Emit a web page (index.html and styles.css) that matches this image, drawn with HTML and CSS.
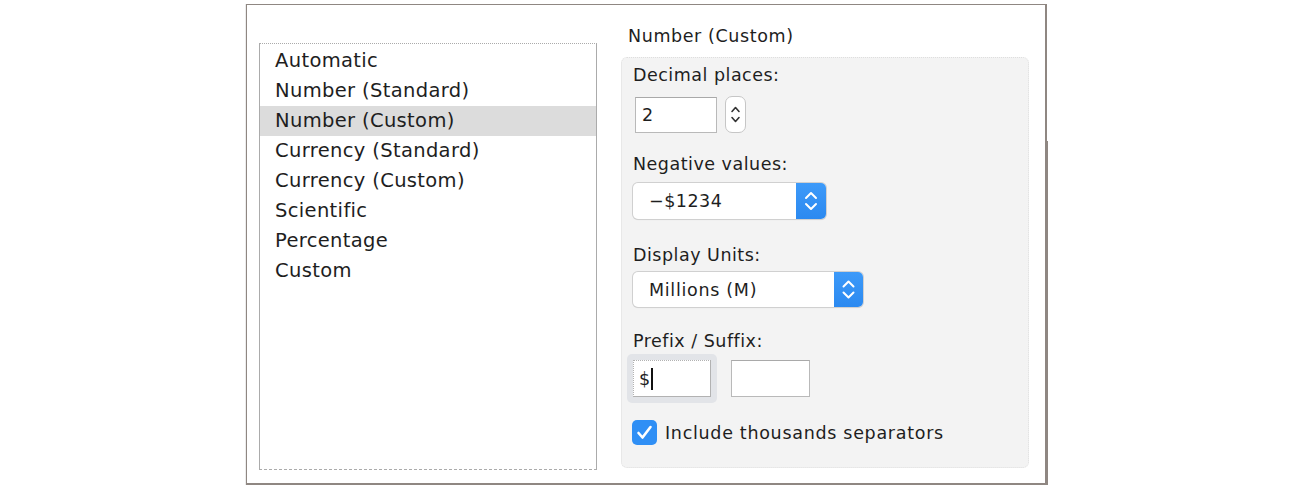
FILE: index.html
```html
<!DOCTYPE html>
<html>
<head>
<meta charset="utf-8">
<link rel="stylesheet" href="styles.css">
</head>
<body>
<div class="frame">
  <ul class="list">
    <li>Automatic</li>
    <li>Number (Standard)</li>
    <li class="sel">Number (Custom)</li>
    <li>Currency (Standard)</li>
    <li>Currency (Custom)</li>
    <li>Scientific</li>
    <li>Percentage</li>
    <li>Custom</li>
  </ul>
  <div class="right">
    <div class="title">Number (Custom)</div>
    <div class="panel">
      <div class="label l1">Decimal places:</div>
      <div class="row">
        <div class="field dec">2</div>
        <div class="stepper">
          <svg width="21" height="37" viewBox="0 0 21 37"><path d="M7 15.5 L10.5 11.5 L14 15.5" fill="none" stroke="#333" stroke-width="1.6" stroke-linecap="round" stroke-linejoin="round"/><path d="M7 21.5 L10.5 25.5 L14 21.5" fill="none" stroke="#333" stroke-width="1.6" stroke-linecap="round" stroke-linejoin="round"/></svg>
        </div>
      </div>
      <div class="label l2">Negative values:</div>
      <div class="select s1">
        <span class="val">−$1234</span>
        <span class="arrows"><svg width="30" height="36" viewBox="0 0 30 36"><path d="M10 15 L15 10 L20 15" fill="none" stroke="#fff" stroke-width="2" stroke-linecap="round" stroke-linejoin="round"/><path d="M10 21 L15 26 L20 21" fill="none" stroke="#fff" stroke-width="2" stroke-linecap="round" stroke-linejoin="round"/></svg></span>
      </div>
      <div class="label l3">Display Units:</div>
      <div class="select s2">
        <span class="val">Millions (M)</span>
        <span class="arrows"><svg width="29" height="35" viewBox="0 0 29 35"><path d="M9.5 14.5 L14.5 9.5 L19.5 14.5" fill="none" stroke="#fff" stroke-width="2" stroke-linecap="round" stroke-linejoin="round"/><path d="M9.5 20.5 L14.5 25.5 L19.5 20.5" fill="none" stroke="#fff" stroke-width="2" stroke-linecap="round" stroke-linejoin="round"/></svg></span>
      </div>
      <div class="label l4">Prefix / Suffix:</div>
      <div class="row prefixrow">
        <div class="ring"><div class="field px">$<span class="caret"></span></div></div>
        <div class="field sx"></div>
      </div>
      <div class="check">
        <span class="box"><svg width="25" height="25" viewBox="0 0 25 25"><path d="M6.5 13 L10.5 17.5 L18.5 7" fill="none" stroke="#fff" stroke-width="2.6" stroke-linecap="round" stroke-linejoin="round"/></svg></span>
        <span class="clabel">Include thousands separators</span>
      </div>
    </div>
  </div>
</div>
</body>
</html>
```

FILE: styles.css
```css
html, body {
  margin: 0;
  padding: 0;
  background: #fff;
}
body {
  font-family: "DejaVu Sans", "Liberation Sans", sans-serif;
  color: #1e1e1e;
  padding: 4px 0 0 246px;
}
.frame {
  position: relative;
  box-sizing: border-box;
  width: 801px;
  height: 481px;
  border: 1px solid #8f8782;
  border-right-width: 2px;
  border-bottom-width: 2px;
  background: #fff;
  display: flex;
  padding: 38px 0 0 12px;
  box-shadow: -1px 0 0 #ececec;
}
.frame::after {
  content: "";
  position: absolute;
  right: -3px;
  top: 136px;
  bottom: -2px;
  width: 2px;
  background: #8f8782;
}
.list {
  list-style: none;
  margin: 0;
  padding: 2px 0 0 0;
  box-sizing: border-box;
  width: 338px;
  height: 427px;
  border: 1px solid #ababab;
  border-bottom-style: dashed;
  border-top-style: dotted;
}
.list li {
  height: 30px;
  line-height: 30px;
  padding-left: 15px;
  font-size: 19.5px;
  letter-spacing: 0.35px;
}
.list li.sel {
  background: #dcdcdc;
}
.right {
  margin-left: 24px;
  margin-top: -38px;
  display: flex;
  flex-direction: column;
}
.title {
  font-size: 17.5px;
  letter-spacing: 0.6px;
  height: 20px;
  line-height: 20px;
  margin: 21px 0 11px 7px;
}
.panel {
  box-sizing: border-box;
  width: 408px;
  height: 411px;
  background: #f3f3f3;
  border: 1px dotted #dedede;
  border-radius: 6px;
  padding: 6px 0 0 11px;
  display: flex;
  flex-direction: column;
  align-items: flex-start;
}
.label {
  font-size: 17.5px;
  letter-spacing: 0.5px;
  height: 22px;
  line-height: 22px;
}
.l1 { margin-bottom: 10px; }
.l2 { margin-top: 20px; margin-bottom: 8px; }
.l3 { margin-top: 25px; margin-bottom: 6px; }
.l4 { margin-top: 23px; margin-bottom: 2px; }
.row {
  display: flex;
  align-items: center;
}
.field {
  box-sizing: border-box;
  background: #fff;
  border: 1px solid #b9b9b9;
  border-top-color: #a9a9a9;
  font-size: 17.5px;
  display: flex;
  align-items: center;
}
.dec {
  width: 82px;
  height: 36px;
  margin-left: 2px;
  padding-left: 6px;
}
.stepper {
  box-sizing: border-box;
  width: 21px;
  height: 37px;
  margin-left: 8px;
  border: 1px solid #c6c6c6;
  border-radius: 7px;
  background: #fff;
  display: flex;
}
.stepper svg { margin: -1px; }
.select {
  box-sizing: border-box;
  display: flex;
  align-items: center;
  justify-content: space-between;
  background: #fff;
  border-radius: 5px;
  box-shadow: 0 0 0 1px #d0d0d0, 0 1px 1px rgba(0,0,0,0.12);
  font-size: 17.5px;
  overflow: hidden;
}
.select .val { padding-left: 16px; }
.s1 .val { letter-spacing: 0.5px; }
.s2 .val { letter-spacing: 0.7px; }
.s1 { width: 193px; height: 36px; }
.s2 { width: 230px; height: 35px; }
.arrows {
  display: flex;
  align-self: stretch;
  background: linear-gradient(#3d9af9, #2b89f0);
}
.prefixrow { margin-left: -6px; }
.ring {
  box-sizing: border-box;
  width: 90px;
  height: 49px;
  background: #e2e4e8;
  border-radius: 5px;
  padding: 6px;
}
.px {
  width: 78px;
  height: 37px;
  padding-left: 5px;
  border-style: dotted solid solid dotted;
  border-color: #b2b2b2;
}
.caret {
  display: inline-block;
  width: 1.5px;
  height: 22px;
  background: #111;
  margin-left: 1px;
}
.sx {
  width: 79px;
  height: 37px;
  margin-left: 14px;
}
.check {
  display: flex;
  align-items: center;
  margin-top: 17px;
  margin-left: -1px;
}
.box {
  width: 25px;
  height: 25px;
  border-radius: 5px;
  background: #2f8ff5;
  display: flex;
}
.clabel {
  font-size: 17.5px;
  margin-left: 8px;
  letter-spacing: 0.7px;
}
```
